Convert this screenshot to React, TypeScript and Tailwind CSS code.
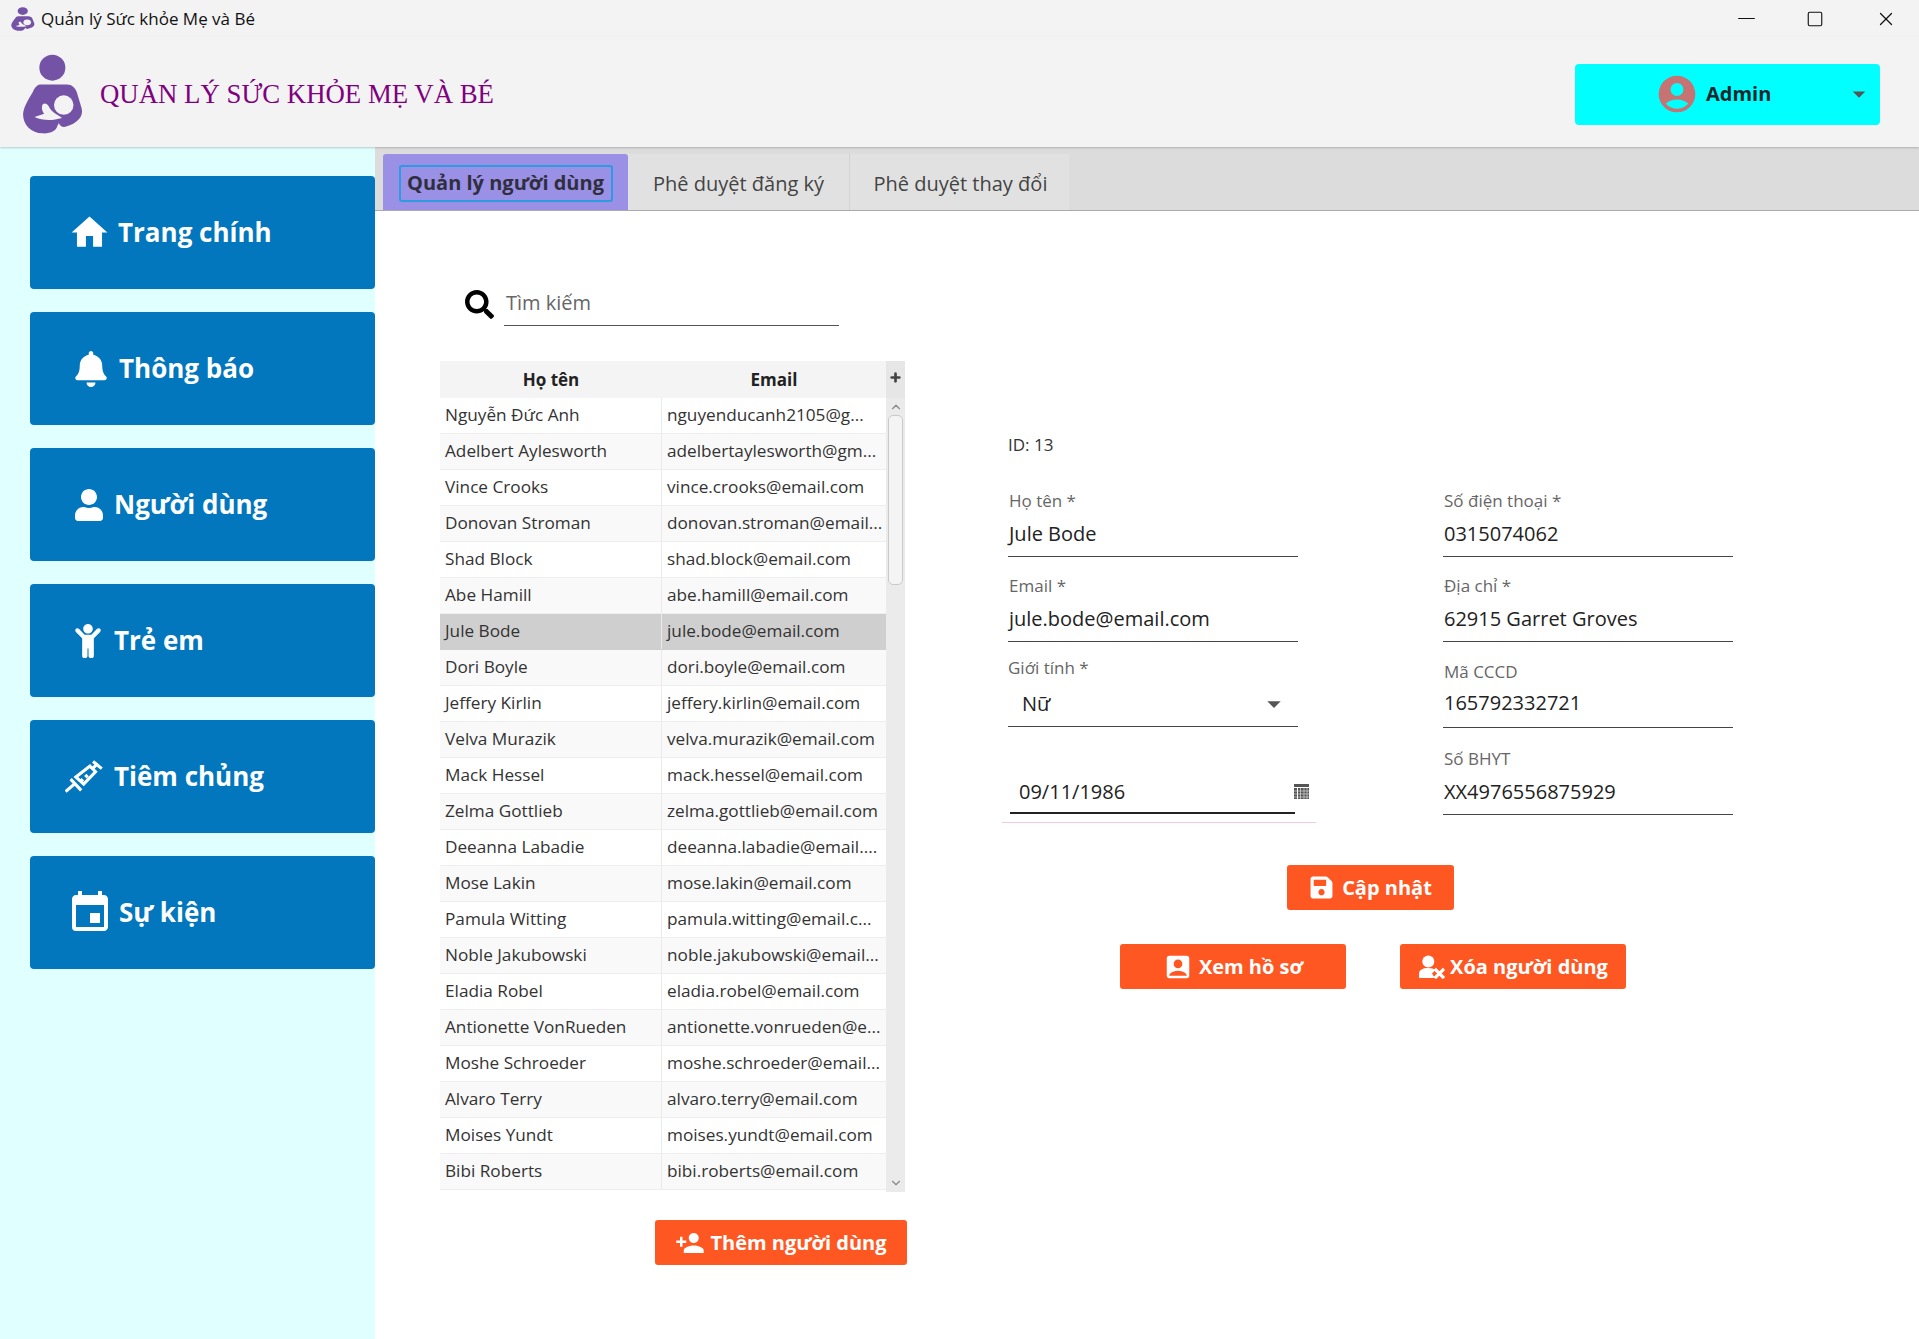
import { FaBell, FaUser, FaChild, FaSearch, FaSave } from "react-icons/fa";
import { MdHome, MdEvent, MdAccountBox, MdPersonAdd, MdAccountCircle, MdArrowDropDown } from "react-icons/md";
import { LuMinus, LuPlus, LuSquare, LuX, LuChevronUp, LuChevronDown } from "react-icons/lu";
import type { ReactNode } from "react";

const users = [
  ["Nguyễn Đức Anh", "nguyenducanh2105@g..."],
  ["Adelbert Aylesworth", "adelbertaylesworth@gm..."],
  ["Vince Crooks", "vince.crooks@email.com"],
  ["Donovan Stroman", "donovan.stroman@email..."],
  ["Shad Block", "shad.block@email.com"],
  ["Abe Hamill", "abe.hamill@email.com"],
  ["Jule Bode", "jule.bode@email.com"],
  ["Dori Boyle", "dori.boyle@email.com"],
  ["Jeffery Kirlin", "jeffery.kirlin@email.com"],
  ["Velva Murazik", "velva.murazik@email.com"],
  ["Mack Hessel", "mack.hessel@email.com"],
  ["Zelma Gottlieb", "zelma.gottlieb@email.com"],
  ["Deeanna Labadie", "deeanna.labadie@email...."],
  ["Mose Lakin", "mose.lakin@email.com"],
  ["Pamula Witting", "pamula.witting@email.c..."],
  ["Noble Jakubowski", "noble.jakubowski@email..."],
  ["Eladia Robel", "eladia.robel@email.com"],
  ["Antionette VonRueden", "antionette.vonrueden@e..."],
  ["Moshe Schroeder", "moshe.schroeder@email..."],
  ["Alvaro Terry", "alvaro.terry@email.com"],
  ["Moises Yundt", "moises.yundt@email.com"],
  ["Bibi Roberts", "bibi.roberts@email.com"],
];

const Logo = ({ className, stretch }: { className: string; stretch?: boolean }) => (
  <svg viewBox="38 38 188 246" className={className} preserveAspectRatio={stretch ? "none" : "xMidYMid meet"}>
    <circle cx="130" cy="80" r="40" fill="#7452a5" />
    <path
      fill="#7452a5"
      d="M95 132 H175 C190 132 200 142 205 155 L220 205 C226 230 210 250 170 262 C160 264 152 258 150 250 L146 258 C142 275 125 283 100 282 C65 282 40 255 40 225 C40 205 55 180 70 155 C76 140 84 132 95 132 Z"
    />
    <circle cx="165" cy="195" r="30" fill="#f3f3f3" />
    <path
      fill="#f3f3f3"
      d="M75 232 L105 222 C100 215 95 205 100 193 C110 185 118 195 122 205 C128 215 140 222 150 228 L160 235 L135 240 C115 242 90 240 75 232 Z"
    />
  </svg>
);

const Syringe = () => (
  <svg viewBox="10 50 122 110" className="w-[38px] h-[36px]" fill="none" stroke="white" strokeWidth="10">
    <path d="M12 152 L40 128" />
    <path d="M28 112 L62 148" />
    <path d="M45 105 L90 70 L108 88 L70 128 Z" />
    <path d="M60 112 L68 120 M75 98 L83 106" />
    <path d="M98 78 L115 62" />
    <path d="M100 55 L128 78" />
  </svg>
);

const UserX = () => (
  <svg viewBox="0 0 30 26" className="w-[28px] h-[24px]" fill="white">
    <circle cx="11" cy="7" r="6.5" />
    <path d="M1 25 V20 C1 16 5 14 11 14 C14 14 17 15 19 16 L15 20 L18 25 Z" />
    <path d="M18 15 L28 25 M28 15 L18 25" stroke="white" strokeWidth="3.5" fill="none" />
  </svg>
);

const CalendarGrid = () => (
  <svg viewBox="0 0 15 15" className="w-[15px] h-[15px]" fill="#555">
    <rect x="0" y="0" width="15" height="3" />
    <path d="M0 4 H15 V15 H0 Z M3 4 V15 H4 V4 Z" />
    <path d="M6.5 4 V15 M10 4 V15 M13 4 V15 M0 7 H15 M0 10 H15 M0 13 H15" stroke="#ddd" strokeWidth="0.7" />
  </svg>
);

const NavButton = ({ icon, label, gap }: { icon: ReactNode; label: string; gap: string }) => (
  <div className={`h-[113px] bg-[#0277bd] rounded-[4px] flex items-center text-white text-[26px] font-bold ${gap}`}>
    {icon}
    <span>{label}</span>
  </div>
);

const Field = ({
  label,
  value,
  className,
  valueClass = "pb-[6px]",
}: {
  label: string;
  value: string;
  className: string;
  valueClass?: string;
}) => (
  <div className={`w-[290px] flex flex-col ${className}`}>
    <div className="pl-[1px] text-[17px] leading-[22px] text-[#666]">{label}</div>
    <div className={`mt-[5px] h-[40px] pl-[1px] flex items-center text-[20px] text-[#222] border-b border-[#444] ${valueClass}`}>{value}</div>
  </div>
);

const ActionButton = ({ icon, label, className }: { icon: ReactNode; label: string; className: string }) => (
  <div className={`h-[45px] bg-[#ff5722] rounded-[3px] flex items-center justify-center text-white text-[20px] font-bold ${className}`}>
    {icon}
    <span>{label}</span>
  </div>
);

export default function App() {
  return (
    <div className="w-[1919px] h-[1339px] flex flex-col overflow-hidden bg-white font-['Open_Sans',sans-serif]">
      {/* window title bar */}
      <div className="h-[37px] bg-[#f3f3f3] flex items-center pl-[11px] text-[#111]">
        <Logo className="w-[24px] h-[24px]" stretch />
        <span className="ml-[6px] text-[17px]">Quản lý Sức khỏe Mẹ và Bé</span>
        <div className="ml-auto flex items-center">
          <LuMinus className="w-[27px] h-[27px] mr-[46px]" strokeWidth={1} />
          <LuSquare className="w-[18px] h-[18px] mr-[51px]" strokeWidth={1.5} />
          <LuX className="w-[22px] h-[22px] mr-[22px]" strokeWidth={1.3} />
        </div>
      </div>

      {/* app header */}
      <div className="h-[110px] bg-[#f3f3f3] flex items-center pt-[4px] pl-[22px] pr-[39px] shadow-[0_1px_2px_rgba(0,0,0,0.2)] z-10">
        <Logo className="w-[62px] h-[80px]" />
        <span className="ml-[16px] text-[26.8px] text-[#800080] font-['Liberation_Serif',serif]">QUẢN LÝ SỨC KHỎE MẸ VÀ BÉ</span>
        <div className="ml-auto w-[305px] h-[61px] bg-[#00ffff] rounded-[4px] flex items-center pl-[80px] pr-[6px]">
          <MdAccountCircle className="w-[44px] h-[44px] text-[#c57373]" />
          <span className="ml-[7px] text-[20px] font-bold text-[#10282c]">Admin</span>
          <MdArrowDropDown className="ml-auto w-[30px] h-[30px] text-[#555]" />
        </div>
      </div>

      <div className="flex-1 flex">
        {/* sidebar */}
        <div className="w-[375px] bg-[#e0ffff] pl-[30px] pt-[29px] flex flex-col gap-[23px]">
          <NavButton gap="pl-[38px] gap-[7px]" icon={<MdHome className="w-[43px] h-[43px]" />} label="Trang chính" />
          <NavButton gap="pl-[45px] gap-[12px]" icon={<FaBell className="w-[32px] h-[36px]" />} label="Thông báo" />
          <NavButton gap="pl-[45px] gap-[11px]" icon={<FaUser className="w-[28px] h-[32px]" />} label="Người dùng" />
          <NavButton gap="pl-[44px] gap-[12px]" icon={<FaChild className="w-[28px] h-[34px]" />} label="Trẻ em" />
          <NavButton gap="pl-[35px] gap-[11px]" icon={<Syringe />} label="Tiêm chủng" />
          <NavButton gap="pl-[36px] gap-[5px]" icon={<MdEvent className="w-[48px] h-[48px]" />} label="Sự kiện" />
        </div>

        <div className="flex-1 flex flex-col">
          {/* tabs */}
          <div className="h-[64px] bg-[#dcdcdc] border-b border-[#aaa] flex items-end pl-[8px] text-[20px] text-[#444]">
            <div className="w-[245px] h-[56px] bg-[#9a90e6] rounded-t-[3px] flex items-center justify-center pt-[2px]">
              <div className="w-[214px] h-[37px] border-2 border-[#2e9be0] rounded-[3px] flex items-center justify-center font-bold text-[#2f2f3d] text-[20px]">
                Quản lý người dùng
              </div>
            </div>
            <div className="w-[222px] h-[56px] pt-[3px] bg-[#e1e1e1] border-r border-[#d2d2d2] flex items-center justify-center">Phê duyệt đăng ký</div>
            <div className="w-[219px] h-[56px] pt-[3px] pl-[2px] bg-[#e1e1e1] flex items-center justify-center">Phê duyệt thay đổi</div>
          </div>

          <div className="flex-1 flex pl-[65px]">
            {/* user list */}
            <div className="w-[467px] flex flex-col">
              <div className="mt-[77px] flex items-center pl-[25px] h-[38px]">
                <FaSearch className="w-[29px] h-[29px] -mt-[6px] text-black" />
                <div className="ml-[10px] w-[335px] h-[38px] border-b border-[#555] text-[20px] leading-[30px] pl-[2px] text-[#666]">Tìm kiếm</div>
              </div>

              <div className="mt-[35px] h-[831px] w-[465px] flex overflow-hidden">
                <div className="w-[446px] flex flex-col">
                  <div className="h-[37px] shrink-0 bg-[#f4f4f4] flex items-center text-[17px] font-bold text-[#222]">
                    <div className="w-[222px] text-center">Họ tên</div>
                    <div className="flex-1 text-center">Email</div>
                  </div>
                  {users.map(([name, email], index) => (
                    <div
                      key={index}
                      className={`h-[36px] shrink-0 flex items-center text-[17.2px] text-[#333] border-b ${
                        name === "Jule Bode" ? "bg-[#cfcfcf] border-[#cfcfcf]" : index % 2 === 0 ? "bg-white border-[#eee]" : "bg-[#f9f9f9] border-[#eee]"
                      }`}
                    >
                      <div className="w-[222px] h-full flex items-center pl-[5px] pb-[2px] border-r border-[#eaeaea] whitespace-nowrap">{name}</div>
                      <div className="flex-1 pl-[5px] pb-[2px] whitespace-nowrap">{email}</div>
                    </div>
                  ))}
                </div>
                <div className="w-[19px] flex flex-col bg-[#ebebeb]">
                  <div className="h-[37px] shrink-0 pb-[5px] bg-[#e6e6e6] flex items-center justify-center">
                    <LuPlus className="w-[13px] h-[13px] text-[#444]" strokeWidth={5} />
                  </div>
                  <LuChevronUp className="w-[16px] h-[14px] mx-auto mt-[2px] text-[#888]" />
                  <div className="w-[15px] h-[170px] mx-auto mt-[1px] bg-[#f4f4f4] border border-[#c9c9c9] rounded-[5px]" />
                  <LuChevronDown className="w-[16px] h-[14px] mx-auto mt-auto mb-[2px] text-[#888]" />
                </div>
              </div>

              <div className="mt-[28px] ml-[215px]">
                <ActionButton
                  className="w-[252px] gap-[5px]"
                  icon={<MdPersonAdd className="w-[30px] h-[30px]" />}
                  label="Thêm người dùng"
                />
              </div>
            </div>

            {/* detail form */}
            <div className="ml-[101px] w-[740px] flex flex-col">
              <div className="mt-[222px] text-[17px] leading-[24px] text-[#333]">ID: 13</div>
              <div className="mt-[33px] grid grid-cols-[435px_290px]">
                <Field label="Họ tên *" value="Jule Bode" className="" />
                <Field label="Số điện thoại *" value="0315074062" className="" />
                <Field label="Email *" value="jule.bode@email.com" className="mt-[18px]" />
                <Field label="Địa chỉ *" value="62915 Garret Groves" className="mt-[18px]" />
                <div className="w-[290px] flex flex-col mt-[15px]">
                  <div className="text-[17px] leading-[22px] text-[#666]">Giới tính *</div>
                  <div className="mt-[8px] h-[40px] flex items-center pl-[14px] pr-[8px] pb-[6px] text-[20px] text-[#222] border-b border-[#444]">
                    Nữ
                    <MdArrowDropDown className="ml-auto w-[32px] h-[32px] text-[#555]" />
                  </div>
                </div>
                <Field label="Mã CCCD" value="165792332721" className="mt-[19px]" valueClass="pb-[9px]" />
                <div className="w-[314px] -ml-[6px] mt-[32px] h-[66px] flex flex-col">
                  <div className="ml-[8px] h-[54px] flex items-end">
                    <div className="w-[285px] h-[40px] pl-[9px] pb-[2px] flex items-center text-[20px] text-[#222] border-b-2 border-[#222]">09/11/1986</div>
                    <div className="ml-[-1px] mb-[15px]"><CalendarGrid /></div>
                  </div>
                  <div className="mt-[8px] h-[1px] bg-[#f6c9d6]" />
                </div>
                <Field label="Số BHYT" value="XX4976556875929" className="mt-[20px]" />
              </div>

              <div className="mt-[39px] ml-[279px]">
                <ActionButton className="w-[167px] gap-[8px]" icon={<FaSave className="w-[25px] h-[25px]" />} label="Cập nhật" />
              </div>
              <div className="mt-[34px] ml-[112px] flex gap-[54px]">
                <ActionButton className="w-[226px] gap-[6px]" icon={<MdAccountBox className="w-[30px] h-[30px]" />} label="Xem hồ sơ" />
                <ActionButton className="w-[226px] gap-[4px]" icon={<UserX />} label="Xóa người dùng" />
              </div>
            </div>
          </div>
        </div>
      </div>
    </div>
  );
}
